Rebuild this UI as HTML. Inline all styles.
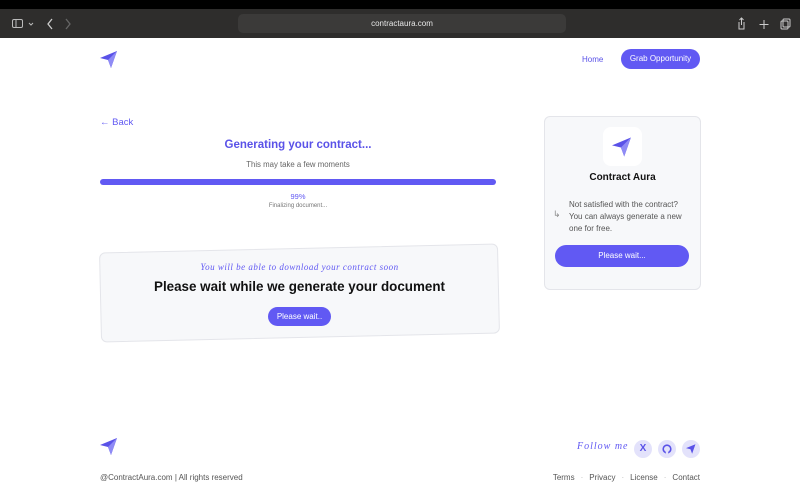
<!DOCTYPE html>
<html><head><meta charset="utf-8"><style>
*{margin:0;padding:0;box-sizing:border-box}
body{width:800px;height:500px;overflow:hidden;background:#fff;font-family:"Liberation Sans",sans-serif;position:relative}
.top{position:absolute;left:0;top:0;width:800px;height:9px;background:#000}
.bar{position:absolute;left:0;top:9px;width:800px;height:29px;background:#2e2d2c}
.url{position:absolute;left:238px;top:14px;width:328px;height:19px;background:#3b3a39;border-radius:5px;color:#e8e8e8;font-size:8px;text-align:center;line-height:19px}
.abs{position:absolute}
.btn{background:#6159f3;color:#fff;border-radius:12px;text-align:center;font-size:8px}
.dot{color:#bbb;margin:0 6px}
</style></head><body>
<div class="top"></div><div class="bar">
<svg class="abs" style="left:12px;top:10px" width="30" height="10"><rect x="0.5" y="0.5" width="10" height="8" rx="1.5" fill="none" stroke="#bbb"/><line x1="4" y1="1" x2="4" y2="9" stroke="#bbb"/><path d="M17 4l2 2 2-2" stroke="#bbb" fill="none"/></svg>
<svg class="abs" style="left:45px;top:9px" width="30" height="12"><path d="M7 1l-4 5 4 5" stroke="#ccc" fill="none" stroke-width="1.3"/><path d="M21 1l4 5-4 5" stroke="#666" fill="none" stroke-width="1.3"/></svg>
<svg class="abs" style="left:738px;top:8px" width="55" height="14"><path d="M6 5v7h-5v-7M3.5 1v7M1.5 3l2-2 2 2" stroke="#ccc" fill="none"/><path d="M26 3v9M21.5 7.5h9" stroke="#ccc"/><rect x="43" y="4" width="7" height="8" rx="1" stroke="#ccc" fill="none"/><rect x="45" y="2" width="7" height="8" rx="1" stroke="#ccc" fill="none"/></svg>
</div>
<div class="url">contractaura.com</div>
<svg class="abs" style="left:100px;top:51px" width="18" height="17" viewBox="0 0 18 17"><path d="M0 7L17 0 11 17 8 9Z" fill="#5a52e8"/><path d="M17 0L8 9 11 17Z" fill="#8f8bf5"/></svg>
<div class="abs" style="left:582px;top:55px;font-size:8px;color:#5a52e8">Home</div>
<div class="abs btn" style="left:621px;top:49px;width:79px;height:20px;line-height:20px;border-radius:10px">Grab Opportunity</div>

<div class="abs" style="left:100px;top:117px;font-size:9.5px;color:#6159f3">← Back</div>
<div class="abs" style="left:100px;top:139px;width:396px;text-align:center;font-size:11.5px;font-weight:bold;color:#5a52e8">Generating your contract...</div>
<div class="abs" style="left:100px;top:160px;width:396px;text-align:center;font-size:7.8px;color:#666">This may take a few moments</div>
<div class="abs" style="left:100px;top:179px;width:396px;height:6px;border-radius:3px;background:#6159f3"></div>
<div class="abs" style="left:100px;top:192px;width:396px;text-align:center;font-size:7.5px;color:#6159f3">99%</div>
<div class="abs" style="left:100px;top:203px;width:396px;text-align:center;font-size:6px;color:#777">Finalizing document...</div>

<div class="abs" style="left:100px;top:248px;width:399px;height:90px;background:#f7f8fa;border:1px solid #e4e5ea;border-radius:6px;transform:rotate(-1.3deg)"></div>
<div class="abs" style="left:100px;top:262px;width:399px;text-align:center;font-size:9px;font-style:italic;color:#6159f3;font-family:'Liberation Serif',serif;letter-spacing:.5px">You will be able to download your contract soon</div>
<div class="abs" style="left:100px;top:279px;width:399px;text-align:center;font-size:13.4px;font-weight:bold;color:#111">Please wait while we generate your document</div>
<div class="abs btn" style="left:268px;top:307px;width:63px;height:19px;line-height:19px;border-radius:10px">Please wait..</div>

<div class="abs" style="left:544px;top:116px;width:157px;height:174px;background:#f7f8fa;border:1px solid #e4e5ea;border-radius:6px"></div>
<div class="abs" style="left:603px;top:127px;width:39px;height:39px;background:#fff;border-radius:8px"></div>
<svg class="abs" style="left:612px;top:137px" width="20" height="20" viewBox="0 0 18 17"><path d="M0 7L17 0 11 17 8 9Z" fill="#5a52e8"/><path d="M17 0L8 9 11 17Z" fill="#8f8bf5"/></svg>
<div class="abs" style="left:544px;top:172px;width:157px;text-align:center;font-size:10px;font-weight:bold;color:#111">Contract Aura</div>
<div class="abs" style="left:553px;top:209px;font-size:9px;color:#888">↳</div>
<div class="abs" style="left:569px;top:199px;font-size:8px;color:#555;line-height:12px">Not satisfied with the contract?<br>You can always generate a new<br>one for free.</div>
<div class="abs btn" style="left:555px;top:245px;width:134px;height:22px;line-height:22px;border-radius:11px">Please wait...</div>

<svg class="abs" style="left:100px;top:438px" width="18" height="17" viewBox="0 0 18 17"><path d="M0 7L17 0 11 17 8 9Z" fill="#5a52e8"/><path d="M17 0L8 9 11 17Z" fill="#8f8bf5"/></svg>
<div class="abs" style="left:577px;top:441px;font-size:10px;font-style:italic;color:#6159f3;font-family:'Liberation Serif',serif;letter-spacing:1px">Follow me</div>
<div class="abs" style="left:634px;top:440px;width:18px;height:18px;border-radius:50%;background:#e3e2fb;color:#5a52e8;font-size:10px;font-weight:bold;text-align:center;line-height:18px">X</div>
<div class="abs" style="left:658px;top:440px;width:18px;height:18px;border-radius:50%;background:#e3e2fb"></div>
<svg class="abs" style="left:662px;top:444px" width="10" height="10"><circle cx="5" cy="5" r="3.8" stroke="#5a52e8" stroke-width="1.6" fill="none"/><rect x="3.8" y="7" width="2.4" height="3" fill="#e3e2fb"/></svg>
<div class="abs" style="left:682px;top:440px;width:18px;height:18px;border-radius:50%;background:#e3e2fb"></div>
<svg class="abs" style="left:686px;top:444px" width="10" height="10" viewBox="0 0 18 17"><path d="M0 7L17 0 11 17 8 9Z" fill="#5a52e8"/></svg>
<div class="abs" style="left:100px;top:473px;font-size:8px;color:#555">@ContractAura.com | All rights reserved</div>
<div class="abs" style="left:540px;top:473px;width:160px;text-align:right;font-size:8px;color:#555;white-space:nowrap">Terms<span class="dot">·</span>Privacy<span class="dot">·</span>License<span class="dot">·</span>Contact</div>
</body></html>
